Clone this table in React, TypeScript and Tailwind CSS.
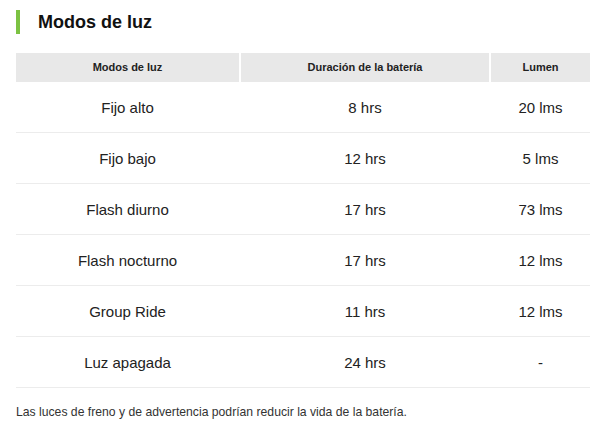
const rows = [
  ["Fijo alto", "8 hrs", "20 lms"],
  ["Fijo bajo", "12 hrs", "5 lms"],
  ["Flash diurno", "17 hrs", "73 lms"],
  ["Flash nocturno", "17 hrs", "12 lms"],
  ["Group Ride", "11 hrs", "12 lms"],
  ["Luz apagada", "24 hrs", "-"],
];

export default function App() {
  return (
    <div className="w-[600px] h-[431px] bg-white text-[#222] font-['Liberation_Sans',Arial,sans-serif]">
      <div className="flex items-center pt-[10px] pl-4">
        <div className="w-[4px] h-[24px] bg-[#7cc242]" />
        <h2 className="ml-[18px] text-[18px] font-bold leading-[24px] text-[#111]">Modos de luz</h2>
      </div>
      <div className="pl-4 pr-[10px] mt-[19px]">
        <div className="grid grid-cols-[223px_248px_1fr] gap-x-[2px]">
          <div className="h-[29px] bg-[#e8e8e8] flex items-center justify-center text-[11px] font-bold">Modos de luz</div>
          <div className="h-[29px] bg-[#e8e8e8] flex items-center justify-center text-[11px] font-bold">Duración de la batería</div>
          <div className="h-[29px] bg-[#e8e8e8] flex items-center justify-center text-[11px] font-bold">Lumen</div>
        </div>
        {rows.map((r) => (
          <div key={r[0]} className="grid grid-cols-[223px_248px_1fr] gap-x-[2px] h-[51px] pt-[3px] border-b border-[#ececec] text-[15px] text-[#222]">
            <div className="flex items-center justify-center">{r[0]}</div>
            <div className="flex items-center justify-center">{r[1]}</div>
            <div className="flex items-center justify-center">{r[2]}</div>
          </div>
        ))}
      </div>
      <p className="pl-4 mt-[15px] text-[12.2px] text-[#333]">Las luces de freno y de advertencia podrían reducir la vida de la batería.</p>
    </div>
  );
}
